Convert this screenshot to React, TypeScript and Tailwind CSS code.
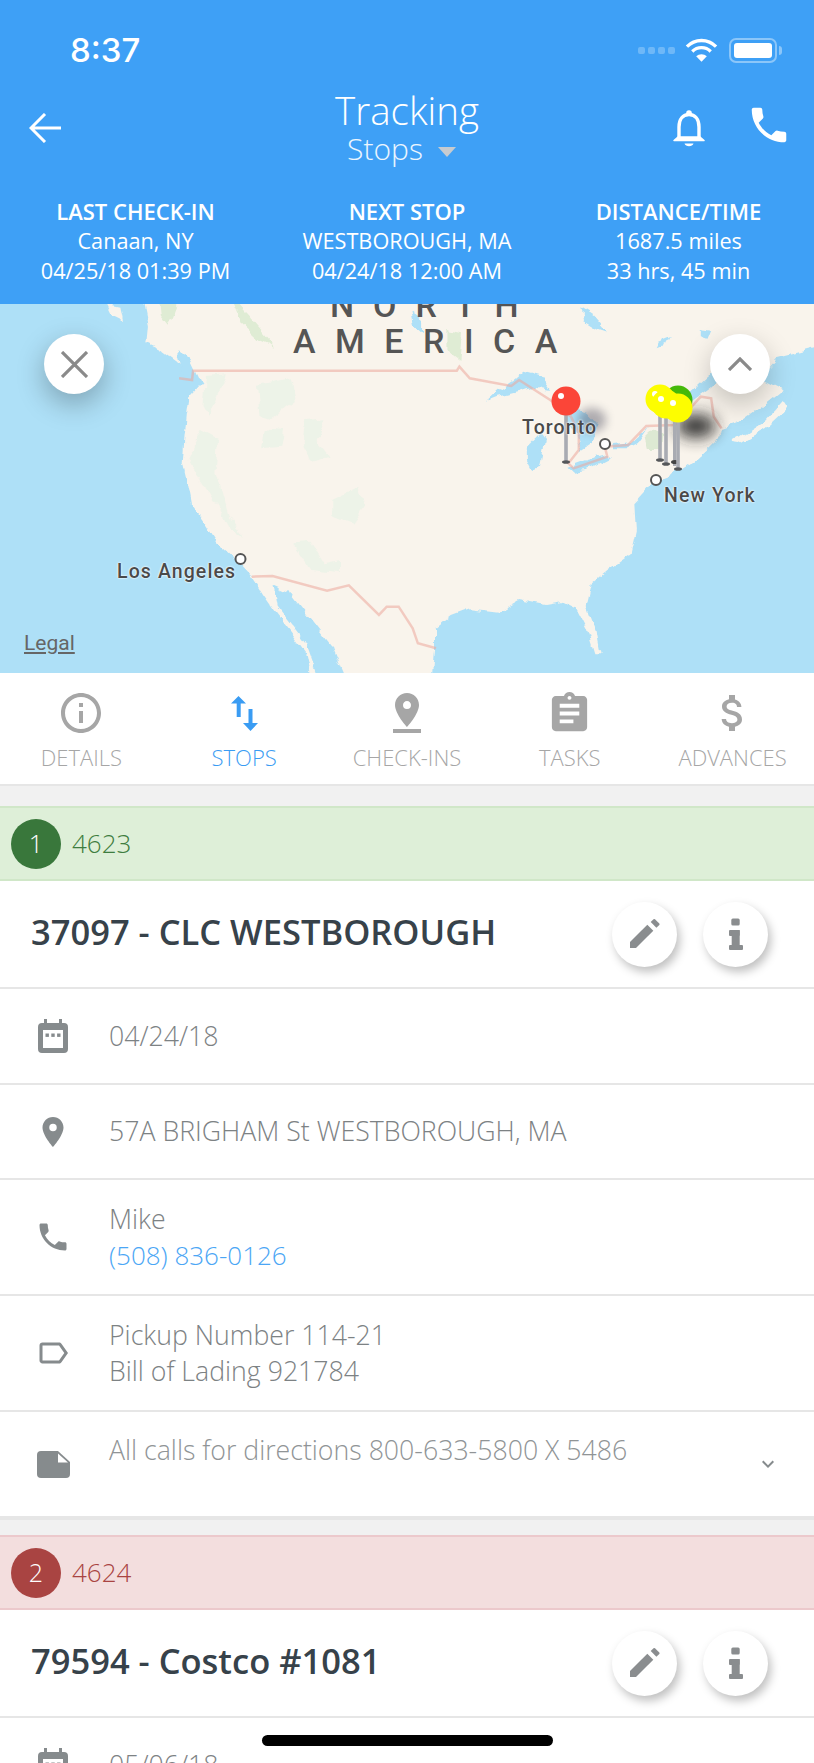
import type { ReactNode } from "react";
import {
  MdAssignment,
  MdAttachMoney,
  MdExpandMore,
  MdInfoOutline,
  MdLabelOutline,
  MdPhone,
  MdPinDrop,
  MdPlace,
} from "react-icons/md";

const stats = [
  { title: "LAST CHECK-IN", lines: ["Canaan, NY", "04/25/18 01:39 PM"] },
  { title: "NEXT STOP", lines: ["WESTBOROUGH, MA", "04/24/18 12:00 AM"] },
  { title: "DISTANCE/TIME", lines: ["1687.5 miles", "33 hrs, 45 min"] },
];

function StopsIcon() {
  return (
    <svg viewBox="0 0 27 35" className="h-[35px] w-[27px]" fill="currentColor">
      <path d="M7.5 0 L15 7.5 H9.7 V21 H5.7 V7.5 H0 Z" />
      <path d="M17.5 13 H21.5 V27 H27 L19.5 35 L12 27 H17.5 Z" />
    </svg>
  );
}

const tabs = [
  { label: "DETAILS", icon: <MdInfoOutline className="text-[48px]" /> },
  { label: "STOPS", icon: <StopsIcon />, active: true },
  { label: "CHECK-INS", icon: <MdPinDrop className="text-[48px]" /> },
  { label: "TASKS", icon: <MdAssignment className="text-[47px]" /> },
  { label: "ADVANCES", icon: <MdAttachMoney className="text-[48px]" /> },
];

function BellIcon() {
  return (
    <svg viewBox="0 0 32 37" className="h-[37px] w-[32px]" fill="none" stroke="#fff" strokeWidth="3.4">
      <circle cx="16" cy="3" r="2.8" fill="#fff" stroke="none" />
      <path d="M6 29 V17 C6 9 10 4.5 16 4.5 C22 4.5 26 9 26 17 V29" />
      <path d="M1 30.5 L5 27 H27 L31 30.5 Z" fill="#fff" stroke="#fff" strokeWidth="1.5" strokeLinejoin="round" />
      <path d="M11.5 33.5 H20.5 C19.5 37 12.5 37 11.5 33.5 Z" fill="#fff" stroke="none" />
    </svg>
  );
}

function CalendarIcon() {
  return (
    <svg viewBox="0 0 30 34" className="h-[34px] w-[30px]">
      <path
        fill="#868b8d"
        d="M6 0 H9 V4 H21 V0 H24 V4 H26 A4 4 0 0 1 30 8 V30 A4 4 0 0 1 26 34 H4 A4 4 0 0 1 0 30 V8 A4 4 0 0 1 4 4 H6 Z"
      />
      <rect x="5" y="11" width="20" height="18" fill="#fff" />
      <rect x="7.5" y="14.5" width="3.4" height="3.4" fill="#868b8d" />
      <rect x="13.3" y="14.5" width="3.4" height="3.4" fill="#868b8d" />
      <rect x="19.1" y="14.5" width="3.4" height="3.4" fill="#868b8d" />
    </svg>
  );
}

function NoteIcon() {
  return (
    <svg viewBox="0 0 33 27" className="h-[27px] w-[33px]">
      <path
        fill="#868b8d"
        d="M4 0 H21 L33 11 V23 A4 4 0 0 1 29 27 H4 A4 4 0 0 1 0 23 V4 A4 4 0 0 1 4 0 Z"
      />
      <path fill="#fff" d="M21 2.5 L31 11.5 H21 Z" />
    </svg>
  );
}

function PencilIcon() {
  return (
    <svg viewBox="0 0 32 32" className="h-[32px] w-[32px]" fill="#8a8d8f">
      <path d="M1 24 L18.3 6.7 L24.3 12.7 L7 30 H1 Z" />
      <path d="M21.7 4 L24.5 1.3 A1.2 1.2 0 0 1 26 1.3 L30.3 5.5 A1.2 1.2 0 0 1 30.3 7 L27.4 9.7 Z" />
    </svg>
  );
}

function InfoIcon() {
  return (
    <svg viewBox="0 0 14 32" className="h-[32px] w-[14px]" fill="#8a8d8f">
      <rect x="2.3" y="0.5" width="8.4" height="7" rx="1.5" />
      <rect x="0" y="12" width="10.7" height="6" rx="1" />
      <rect x="2.7" y="12" width="8" height="20" />
      <rect x="0" y="27" width="14" height="5" rx="1" />
    </svg>
  );
}

function MapPin({ x, y, foot, color }: { x: number; y: number; foot: number; color: string }) {
  return (
    <g>
      <rect x={x - 1.8} y={y} width={3.6} height={foot - y} fill="#a9abb2" />
      <ellipse cx={x} cy={foot} rx={4} ry={1.8} fill="#55575a" />
      <circle cx={x} cy={y} r={14.5} fill={color} />
      <circle cx={x - 5} cy={y - 5} r={3} fill="#fff" />
    </g>
  );
}

function MapDrawing() {
  return (
    <svg viewBox="0 0 814 369" className="absolute inset-0 h-full w-full">
      <defs>
        <filter id="blur8" x="-100%" y="-100%" width="300%" height="300%">
          <feGaussianBlur stdDeviation="8" />
        </filter>
        <filter id="blur4" x="-100%" y="-100%" width="300%" height="300%">
          <feGaussianBlur stdDeviation="5" />
        </filter>
        <filter id="rough" filterUnits="userSpaceOnUse" x="-20" y="-20" width="860" height="410">
          <feTurbulence type="fractalNoise" baseFrequency="0.07" numOctaves="3" seed="4" result="n" />
          <feDisplacementMap in="SourceGraphic" in2="n" scale="9" xChannelSelector="R" yChannelSelector="G" />
          <feGaussianBlur stdDeviation="0.4" />
        </filter>
      </defs>
      <rect width="814" height="369" fill="#aee0f7" />
      <g filter="url(#rough)">
        <g transform="translate(0,-4) scale(0.5191,0.3333)">
          <path
            fill="#f9f4ec"
            d="M270 -40 L285 80 L282 130 L310 150 L345 190 L370 225 L388 250 L365 290 L360 340 L355 420 L352 490 L362 560 L368 610 L400 680 L420 730 L455 780 L485 830 L505 880 L530 935 L560 995 L590 1060 L605 1170 L622 1170 L590 1030 L560 970 L535 920 L527 857 L560 880 L600 960 L640 1040 L675 1170 L832 1170 L838 1050 L838 985 L870 945 L905 925 L960 935 L1000 900 L1050 915 L1085 905 L1110 925 L1130 985 L1145 1060 L1155 1060 L1145 980 L1130 920 L1140 850 L1170 810 L1215 760 L1225 690 L1222 610 L1240 580 L1262 540 L1305 515 L1340 480 L1375 430 L1390 385 L1431 360 L1477 309 L1508 270 L1470 240 L1480 200 L1496 171 L1600 130 L1600 -40 Z"
          />
          <path fill="#f9f4ec" d="M1409 425 L1425 411 L1470 366 L1508 300 L1518 324 L1477 384 L1425 429 Z" />
          <path fill="#f9f4ec" d="M205 12 L230 20 L235 60 L215 45 Z" />
          <g fill="#dfecd4">
            <path d="M440 -20 L480 50 L530 140 L500 120 L465 70 Z" />
            <path d="M860 90 L890 100 L885 180 L860 150 Z" />
            <path d="M305 -20 L340 20 L325 80 L310 50 Z" />
          </g>
          <g fill="#edf3e8">
            <path d="M395 225 L435 220 L420 290 L400 350 L390 320 Z" />
            <path d="M495 255 L560 235 L570 300 L520 360 L500 350 Z" />
            <path d="M510 385 L545 390 L540 440 L505 445 Z" />
            <path d="M590 360 L625 355 L610 420 L635 470 L600 485 L585 430 Z" />
            <path d="M385 390 L420 420 L415 520 L440 650 L470 715 L440 680 L395 560 L360 480 Z" />
            <path d="M640 600 L690 560 L705 620 L680 675 L640 650 Z" />
            <path d="M565 730 L600 725 L625 790 L655 780 L655 820 L600 810 Z" />
          </g>
          <path fill="#dde9d3" d="M1242 415 L1262 385 L1272 400 L1270 450 L1248 450 Z" />
          <g fill="#aee0f7">
            <path d="M1320 290 L1370 220 L1410 170 L1400 215 L1370 260 L1335 300 Z" />
            <path d="M340 150 L365 180 L385 245 L372 250 L350 220 Z" />
            <path d="M935 305 L960 270 L990 240 L1010 212 L1040 225 L1062 270 L1030 260 L1000 275 L960 290 Z" />
            <path d="M1085 350 L1095 320 L1130 335 L1150 370 L1140 430 L1120 450 L1110 400 Z" />
            <path d="M1015 440 L1040 400 L1050 420 L1040 500 L1025 510 L1015 480 Z" />
            <path d="M1095 500 L1130 480 L1170 465 L1175 475 L1130 510 L1105 515 Z" />
            <path d="M1180 435 L1215 430 L1240 395 L1250 380 L1230 425 L1205 445 L1180 445 Z" />
            <path d="M1120 25 L1145 50 L1170 95 L1150 85 L1125 60 Z" />
            <path d="M1350 90 L1372 95 L1365 122 L1350 115 Z" />
            <path d="M1265 145 L1275 115 L1290 105 L1280 135 Z" />
            <path d="M790 30 L815 60 L815 100 L795 70 Z" />
          </g>
        </g>
      </g>
      <g transform="translate(0,-4) scale(0.5191,0.3333)" fill="none" stroke="#eda79c" strokeOpacity="0.55">
        <polyline
          vectorEffect="non-scaling-stroke"
          strokeWidth="2.5"
          points="345,235 370,240 372,212 880,212 885,200 905,235 985,258 1000,240 1060,300 1100,350 1115,400 1115,450 1095,490 1105,505 1170,470 1165,440 1210,435 1245,378 1300,375 1350,290 1370,295 1375,350 1390,385"
        />
        <polyline
          vectorEffect="non-scaling-stroke"
          strokeWidth="2.5"
          points="485,830 525,828 630,872 672,856 730,945 745,920 768,920 795,985 805,1030 840,1045"
        />
      </g>
      <ellipse cx="592" cy="116" rx="14" ry="12" fill="#556" opacity="0.45" filter="url(#blur4)" />
      <ellipse cx="696" cy="122" rx="20" ry="12" fill="#222" opacity="0.9" filter="url(#blur8)" />

      <circle cx="605" cy="140" r="5" fill="#fff" stroke="#555" strokeWidth="2" />
      <circle cx="656" cy="176" r="5" fill="#fff" stroke="#555" strokeWidth="2" />
      <circle cx="240.5" cy="255" r="5" fill="#fff" stroke="#555" strokeWidth="2" />

      <rect x="673" y="104" width="3" height="58" fill="#a9abb2" />
      <ellipse cx="675" cy="158" rx="4" ry="2" fill="#444" />
      <circle cx="678" cy="96" r="14.5" fill="#45b90a" />
      <MapPin x={566} y={97} foot={158} color="#fb4538" />
      <MapPin x={660} y={95} foot={156} color="#fdfd00" />
      <MapPin x={666} y={100} foot={160} color="#fdfd00" />
      <MapPin x={678} y={104} foot={165} color="#fdfd00" />
    </svg>
  );
}

function MapLabel({ children, className }: { children: ReactNode; className: string }) {
  return (
    <span
      className={`absolute font-['Roboto',sans-serif] text-[19.5px] font-medium leading-5 tracking-[1.1px] text-[#4a4a4a] [text-shadow:0_0_2px_#fff,0_0_2px_#fff] ${className}`}
    >
      {children}
    </span>
  );
}

function RoundButton({ children }: { children: ReactNode }) {
  return (
    <button className="flex h-[65px] w-[65px] items-center justify-center rounded-full bg-white shadow-[3px_5px_10px_rgba(0,0,0,0.25)]">
      {children}
    </button>
  );
}

function StopBanner({
  n,
  code,
  bg,
  edge,
  dot,
  fg,
}: {
  n: number;
  code: string;
  bg: string;
  edge: string;
  dot: string;
  fg: string;
}) {
  return (
    <div className={`flex h-[75px] items-center border-y-2 pl-[11px] ${bg} ${edge}`}>
      <span
        className={`flex h-[50px] w-[50px] items-center justify-center rounded-full text-[25px] font-light text-white ${dot}`}
      >
        {n}
      </span>
      <span className={`ml-[11px] text-[26px] font-light ${fg}`}>{code}</span>
    </div>
  );
}

function TitleRow({ title }: { title: string }) {
  return (
    <div className="flex h-[108px] items-center justify-between border-b-2 border-[#e6e6e6] pl-[31px] pr-[46px]">
      <h2 className="mb-[4px] text-[34.5px] font-semibold text-[#37424a]">{title}</h2>
      <div className="flex gap-[26px]">
        <RoundButton>
          <PencilIcon />
        </RoundButton>
        <RoundButton>
          <InfoIcon />
        </RoundButton>
      </div>
    </div>
  );
}

function InfoRow({
  icon,
  height,
  children,
}: {
  icon: ReactNode;
  height: string;
  children: ReactNode;
}) {
  return (
    <div className={`flex items-center border-b-2 border-[#e6e6e6] ${height}`}>
      <div className="flex w-[109px] shrink-0 justify-center pr-[3px] text-[#868b8d]">{icon}</div>
      <div className="text-[26.7px] font-light leading-9 text-[#7d8284]">{children}</div>
    </div>
  );
}

export default function App() {
  return (
    <div className="relative h-[1763px] w-[814px] overflow-hidden bg-white font-['Open_Sans',sans-serif]">
      <header className="h-[304px] bg-[#3ea0f6] text-white">
        <div className="flex h-[78px] items-center justify-between pb-[10px] pl-[70px] pr-[32px] pt-[32px]">
          <span className="font-['Inter',sans-serif] text-[33px] font-medium leading-[36px]">8:37</span>
          <div className="flex items-center">
            <div className="mr-[10px] flex gap-[3px]">
              <span className="h-[7px] w-[7px] rounded-[2px] bg-white/25" />
              <span className="h-[7px] w-[7px] rounded-[2px] bg-white/25" />
              <span className="h-[7px] w-[7px] rounded-[2px] bg-white/25" />
              <span className="h-[7px] w-[7px] rounded-[2px] bg-white/25" />
            </div>
            <svg viewBox="0 0 34 25" className="mr-[11px] h-[25px] w-[33px]" fill="none" stroke="#fff" strokeWidth="3.4">
              <path d="M2 8.5 A21 21 0 0 1 32 8.5" />
              <path d="M7.5 13.5 A13.5 13.5 0 0 1 26.5 13.5" />
              <path d="M17 24 L11.5 18.5 A8 8 0 0 1 22.5 18.5 Z" fill="#fff" stroke="none" />
            </svg>
            <div className="flex items-center">
              <div className="flex h-[25px] w-[48px] items-center rounded-[7px] border-2 border-white/40 p-[3px]">
                <div className="h-full w-full rounded-[3px] bg-white" />
              </div>
              <div className="ml-[2px] h-[9px] w-[3px] rounded-r bg-white/40" />
            </div>
          </div>
        </div>

        <div className="relative h-[88px]">
          <svg
            viewBox="0 0 32 30"
            className="absolute left-[29px] top-[35px] h-[30px] w-[32px]"
            fill="none"
            stroke="#fff"
            strokeWidth="3"
          >
            <path d="M32 15 H3 M16 1 L2 15 L16 29" />
          </svg>
          <div className="flex flex-col items-center pt-[9px]">
            <span className="text-[38.5px] font-light leading-[46px]">Tracking</span>
            <span className="mr-[11px] mt-[1px] flex items-center text-[30px] font-light leading-[30px] text-white/90">
              Stops
              <span className="ml-[15px] mt-[6px] h-0 w-0 border-x-[9px] border-t-[10px] border-x-transparent border-t-[#c6cbd0]" />
            </span>
          </div>
          <div className="absolute left-[673px] top-[32px]">
            <BellIcon />
          </div>
          <MdPhone className="absolute left-[746px] top-[24px] text-[46px]" />
        </div>

        <div className="grid grid-cols-[271px_272px_271px] pt-[30px] text-center text-[21.7px] leading-[30px]">
          {stats.map((s) => (
            <div key={s.title}>
              <div className="text-[22px] font-semibold">{s.title}</div>
              {s.lines.map((line) => (
                <div key={line}>{line}</div>
              ))}
            </div>
          ))}
        </div>
      </header>

      <div className="relative h-[369px] overflow-hidden">
        <MapDrawing />
        <span className="absolute left-[330px] top-[-16px] font-['Roboto',sans-serif] text-[34px] font-medium leading-[34px] tracking-[19px] text-[#555]">
          NORTH
        </span>
        <span className="absolute left-[293px] top-[20px] font-['Roboto',sans-serif] text-[34px] font-medium leading-[34px] tracking-[19.5px] text-[#555]">
          AMERICA
        </span>
        <MapLabel className="left-[522px] top-[114px]">Toronto</MapLabel>
        <MapLabel className="left-[664px] top-[182px]">New York</MapLabel>
        <MapLabel className="left-[117px] top-[258px]">Los Angeles</MapLabel>
        <span className="absolute left-[24px] top-[329px] font-['Roboto',sans-serif] text-[21px] leading-5 text-[#666] underline">
          Legal
        </span>
        <button className="absolute left-[44px] top-[30px] flex h-[60px] w-[60px] items-center justify-center rounded-full bg-white shadow-[0_10px_28px_rgba(0,0,0,0.28)]">
          <svg viewBox="0 0 27 27" className="h-[27px] w-[27px]" fill="none" stroke="#8a8a8a" strokeWidth="3.2">
            <path d="M1 1 L26 26 M26 1 L1 26" />
          </svg>
        </button>
        <button className="absolute left-[710px] top-[30px] flex h-[60px] w-[60px] items-center justify-center rounded-full bg-white shadow-[0_10px_28px_rgba(0,0,0,0.22)]">
          <svg viewBox="0 0 24 14" className="h-[14px] w-[24px]" fill="none" stroke="#8a8a8a" strokeWidth="3.2">
            <path d="M1 13 L12 2 L23 13" />
          </svg>
        </button>
      </div>

      <nav className="grid h-[113px] grid-cols-5 border-b-2 border-[#e6e6e6]">
        {tabs.map((t) => (
          <div
            key={t.label}
            className={`flex flex-col items-center pt-[16px] ${t.active ? "text-[#3a9cf3]" : "text-[#a6a6a6]"}`}
          >
            <div className="flex h-[48px] items-center">{t.icon}</div>
            <span className="mt-[6px] text-[22px] font-light leading-7">{t.label}</span>
          </div>
        ))}
      </nav>

      <div className="h-[20px] bg-[#f1f1f1]" />
      <StopBanner
        n={1}
        code="4623"
        bg="bg-[#deefd8]"
        edge="border-[#d0e7c8]"
        dot="bg-[#39773b]"
        fg="text-[#3e7d40]"
      />
      <TitleRow title="37097 - CLC WESTBOROUGH" />

      <InfoRow icon={<CalendarIcon />} height="h-[96px]">
        04/24/18
      </InfoRow>
      <InfoRow icon={<MdPlace className="text-[36px]" />} height="h-[95px]">
        <div className="mb-[2px]">57A BRIGHAM St WESTBOROUGH, MA</div>
      </InfoRow>
      <InfoRow icon={<MdPhone className="text-[36px]" />} height="h-[116px]">
        <div>Mike</div>
        <div className="text-[26px] text-[#4ba6f5]">(508) 836-0126</div>
      </InfoRow>
      <InfoRow icon={<MdLabelOutline className="text-[36px]" />} height="h-[116px]">
        <div>Pickup Number 114-21</div>
        <div>Bill of Lading 921784</div>
      </InfoRow>

      <div className="flex h-[108px] items-center border-b-4 border-[#e6e6e6]">
        <div className="flex w-[109px] shrink-0 justify-center pr-[3px]">
          <NoteIcon />
        </div>
        <div className="mb-[28px] flex-1 text-[26.7px] font-light leading-9 text-[#909496]">
          All calls for directions 800-633-5800 X 5486
        </div>
        <MdExpandMore className="mr-[34px] text-[24px] text-[#868b8d]" />
      </div>

      <div className="h-[15px] bg-[#f1f1f1]" />
      <StopBanner
        n={2}
        code="4624"
        bg="bg-[#f3dede]"
        edge="border-[#ecc9cc]"
        dot="bg-[#a94442]"
        fg="text-[#a94442]"
      />
      <TitleRow title="79594 - Costco #1081" />
      <InfoRow icon={<CalendarIcon />} height="h-[96px]">
        05/06/18
      </InfoRow>

      <div className="absolute bottom-[17px] left-[262px] h-[11px] w-[291px] rounded-full bg-black" />
    </div>
  );
}
